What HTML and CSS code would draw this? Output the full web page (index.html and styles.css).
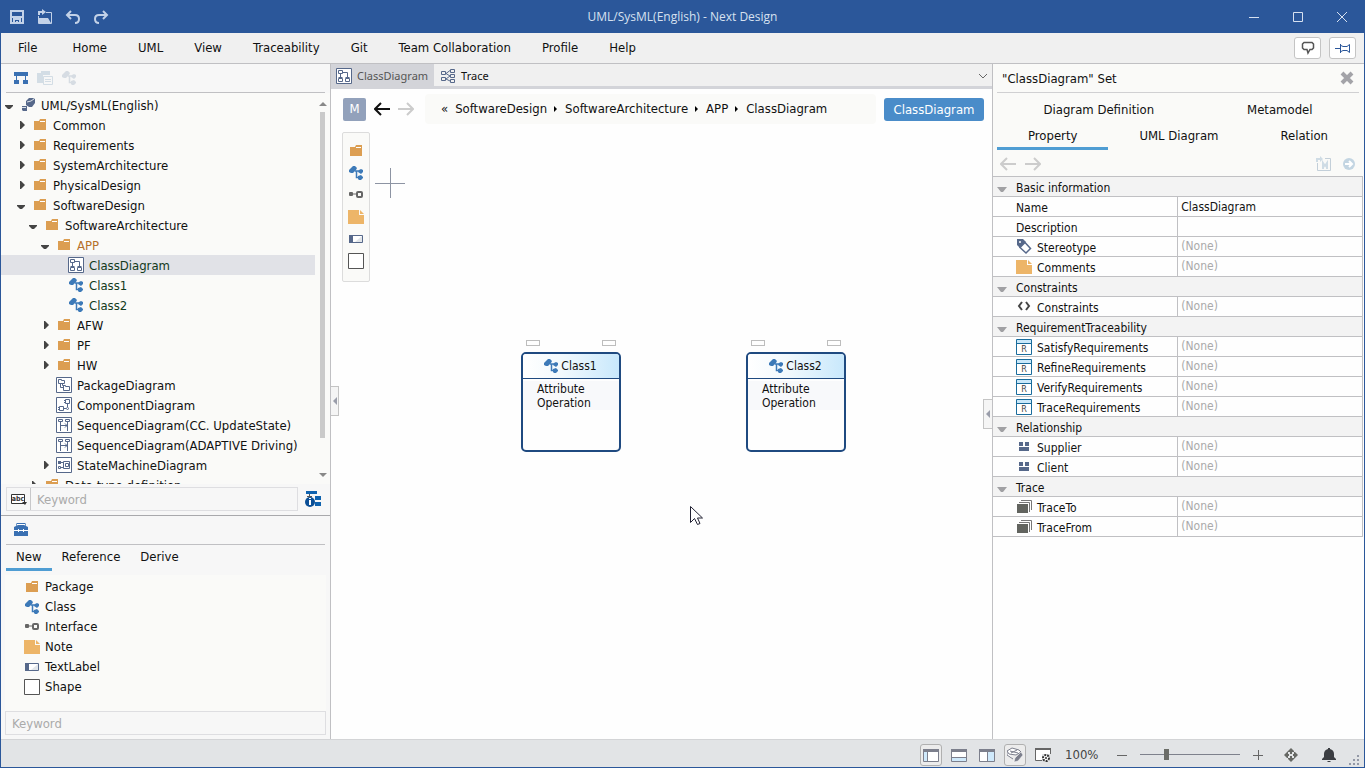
FILE: index.html
```
<!DOCTYPE html>
<html lang="en">
<head>
    <meta charset="UTF-8">
    <meta name="viewport" content="width=device-width, initial-scale=1.0">
    <title>UML/SysML(English) - Next Design</title>
    <link rel="stylesheet" href="styles.css">
</head>
<body>
    <!-- shared icons -->
    <svg class="sprite" aria-hidden="true">
        <symbol id="i-folder" viewBox="0 0 16 16">
            <path fill="#dc9e52" d="M2 4h5l1-2h6v11H2z"/>
            <path fill="none" stroke="#fff" d="M8 4.500h5"/>
        </symbol>
        <symbol id="i-class" viewBox="0 0 16 16">
            <path fill="#3d7ab8" d="M1 5l4-4h2l2 2-1 2-3 3H3L1 7zM11 5l2-1 2 1v2l-2 2-3-2zM10 11l3-1 2 2v1l-2 2h-2l-1-1z"/>
            <path fill="none" stroke="#3d7ab8" stroke-width="1.500" d="M7 6h4M8.500 6.500v6h3"/>
        </symbol>
        <symbol id="i-interface" viewBox="0 0 16 16">
            <rect x="1" y="5" width="4" height="4" rx="1" fill="#666"/>
            <path stroke="#666" d="M4 7h4"/>
            <rect x="9" y="5" width="5" height="5" rx="1" fill="none" stroke="#666" stroke-width="2"/>
        </symbol>
        <symbol id="i-note" viewBox="0 0 16 16">
            <path fill="#edb568" d="M0 1h11v5h5v9H0zM12 1l4 4h-4z"/>
        </symbol>
        <symbol id="i-label" viewBox="0 0 16 16">
            <path fill="#fff" stroke="#56688a" d="M1.500 4.500h13v7h-13z"/>
            <path fill="#e2e6ea" d="M14 5v6H7z"/>
            <path fill="#56688a" d="M1 4h4v8H1z"/>
        </symbol>
        <symbol id="i-shape" viewBox="0 0 16 16">
            <path fill="#fff" stroke="#555" d="M.5.5h15v15H.5z"/>
        </symbol>
        <symbol id="i-classdiagram" viewBox="0 0 16 16">
            <path fill="#fff" stroke="#56688a" d="M.5.5h15v15H.5z"/>
            <path fill="none" stroke="#56688a" d="M2.500 2.500h4v3h-4zM2.500 10.500h4v3h-4zM9.500 10.500h4v3h-4zM4.500 6v4M7 4.500h4.500V10M2.500 9.500h4M9.500 9.500h4"/>
        </symbol>
        <symbol id="i-packagediagram" viewBox="0 0 16 16">
            <path fill="#fff" stroke="#56688a" d="M.5.5h15v15H.5z"/>
            <path fill="none" stroke="#56688a" d="M2.500 2.500h3v1h3v3h-6zM7.500 8.500h2v1h4v4h-6zM4.500 7v3.500H7M6.500 7v1.500h2"/>
        </symbol>
        <symbol id="i-componentdiagram" viewBox="0 0 16 16">
            <path fill="#fff" stroke="#56688a" d="M.5.5h15v15H.5z"/>
            <path fill="none" stroke="#56688a" d="M9.500 2.500h4v4h-4zM8 3.500h2M8 5.500h2M3.500 9.500h4v4h-4zM2 10.500h2M2 12.500h2M8 11.500h2M11.500 7v3"/>
            <circle cx="11.500" cy="11.500" r="1" fill="none" stroke="#56688a"/>
        </symbol>
        <symbol id="i-sequencediagram" viewBox="0 0 16 16">
            <path fill="#fff" stroke="#56688a" d="M.5.5h15v15H.5z"/>
            <path fill="none" stroke="#56688a" d="M2.500 2.500h4v2h-4zM9.500 2.500h4v2h-4zM4.500 5v9M11.500 5v9M5 8.500h6M9 6.500l2 2-2 2"/>
        </symbol>
        <symbol id="i-statediagram" viewBox="0 0 16 16">
            <path fill="#fff" stroke="#56688a" d="M.5.5h15v15H.5z"/>
            <path fill="none" stroke="#56688a" d="M2.500 9.500h2v2h-2zM7.500 4.500h6v7h-6zM9.500 6.500h3v3h-3zM5 5.500h3M5 10.500h2"/>
            <path fill="#56688a" d="M2 4h3v3H2z"/>
        </symbol>
        <symbol id="i-req" viewBox="0 0 16 16">
            <path fill="#fff" stroke="#1a6c9c" d="M.5.5h15v15H.5z"/>
            <path fill="#c9e9fb" d="M1 1h14v3H1z"/>
            <path stroke="#1a6c9c" d="M1 4.500h14"/>
            <text x="8" y="13" text-anchor="middle" class="req-letter">R</text>
        </symbol>
        <symbol id="i-relation" viewBox="0 0 16 16">
            <path fill="#56688a" d="M3 3h4v4H3zM9 3h4v4H9zM3 8h10v4H3z"/>
        </symbol>
        <symbol id="i-stack" viewBox="0 0 16 16">
            <path fill="none" stroke="#777" d="M5 1.500h10.500V11M3 3.500h10.500V13"/>
            <path fill="#62645f" d="M1 5h11v9H1z"/>
        </symbol>
        <symbol id="i-back" viewBox="0 0 16 16">
            <path fill="none" stroke="currentColor" stroke-width="2" d="M16 8H1M7 2L1 8l6 6"/>
        </symbol>
        <symbol id="i-forward" viewBox="0 0 16 16">
            <path fill="none" stroke="currentColor" stroke-width="2" d="M0 8h15M9 2l6 6-6 6"/>
        </symbol>
        <symbol id="i-down" viewBox="0 0 16 16"><path fill="currentColor" d="M4 8h8v1l-3 3H7L4 9z"/></symbol>
        <symbol id="i-right" viewBox="0 0 16 16"><path fill="currentColor" d="M7 4h1l4 4-4 4H7z"/></symbol>
        <symbol id="i-fold" viewBox="0 0 16 16"><path fill="currentColor" d="M2 8h10l-4 5H6z"/></symbol>
    </svg>

    <header class="titlebar">
        <div class="quick-access">
            <button aria-label="Save"><svg viewBox="0 0 16 16"><path fill="none" stroke="#c3d2e8" stroke-width="2" d="M2 2h12v12H2zM2 8h12M5 14v-4h6v4"/><path fill="#c3d2e8" d="M7 12h2v2H7z"/></svg></button>
            <button aria-label="Open"><svg viewBox="0 0 16 16"><path fill="none" stroke="#c3d2e8" d="M1.500 7v7.500h13V3.500H9"/><path fill="#c3d2e8" d="M2 14V9h9l3 5zM1 2h4V0l4 3-4 3V4H3v2H1z"/></svg></button>
            <button aria-label="Undo"><svg viewBox="0 0 16 16"><path fill="none" stroke="#c3d2e8" stroke-width="2" d="M6 2L2 6l4 4M2 6h8q4 0 4 4t-4 4"/></svg></button>
            <button aria-label="Redo"><svg viewBox="0 0 16 16"><path fill="none" stroke="#c3d2e8" stroke-width="2" d="M10 2l4 4-4 4M14 6H6q-4 0-4 4t4 4"/></svg></button>
        </div>
        <h1>UML/SysML(English) - Next Design</h1>
        <div class="window-controls">
            <button aria-label="Minimize"><svg viewBox="0 0 12 12"><path stroke="#d7e1f0" d="M1 6.500h10"/></svg></button>
            <button aria-label="Maximize"><svg viewBox="0 0 12 12"><path fill="none" stroke="#d7e1f0" d="M1.500 1.500h9v9h-9z"/></svg></button>
            <button aria-label="Close"><svg viewBox="0 0 12 12"><path stroke="#d7e1f0" d="M1 1l10 10M11 1L1 11"/></svg></button>
        </div>
    </header>

    <nav class="menubar">
        <button class="file-menu">File</button>
        <button>Home</button>
        <button>UML</button>
        <button>View</button>
        <button>Traceability</button>
        <button>Git</button>
        <button>Team Collaboration</button>
        <button>Profile</button>
        <button>Help</button>
        <div class="menubar-tools">
            <button aria-label="Comments"><svg viewBox="0 0 16 16"><path fill="none" stroke="#555" stroke-width="1.500" d="M4 2.500h8L13.500 4v4L12 9.500h-2L8 13 7 9.500H4L2.500 8V4z"/></svg></button>
            <button aria-label="Pin ribbon"><svg viewBox="0 0 16 16"><path fill="none" stroke="#2b579a" d="M0 8.500h5M5.500 4v9M6 5.500l2 1h4l2.500-2v8L12 10.500H8l-2 1"/></svg></button>
        </div>
    </nav>

    <main class="workspace">
        <aside class="navigator">
            <div class="tool-row">
                <button aria-label="Model tree"><svg viewBox="0 0 16 16"><path fill="#3a70b2" d="M1 2h14v4H1zM1 10h5v4H1zM10 10h5v4h-5zM3 6h1v4H3zM12 6h1v4h-1z"/></svg></button>
                <button aria-label="Documents"><svg viewBox="0 0 16 16"><path fill="#d3dde5" d="M0 3h4V1h9v4H6v8H0z"/><path fill="#f7f7f7" stroke="#d3dde5" d="M6.500 6.500h9v8h-9zM8 9.500h6M8 11.500h6"/></svg></button>
                <button aria-label="Classes" class="faded"><svg><use href="#i-class"/></svg></button>
            </div>
            <div class="tree-wrap">
                <ul class="tree">
                    <li class="level-0"><svg><use href="#i-down"/></svg><svg viewBox="0 0 16 16"><path fill="#56688a" d="M2 9h5v5H3l-1-1zM6 4l3-3h4l2 1v4l-3 4H9L6 8z"/><path stroke="#dde3ea" d="M7 5l4-1 3-2M2 10.500h4" fill="none"/></svg>UML/SysML(English)</li>
                    <li class="level-1"><svg><use href="#i-right"/></svg><svg><use href="#i-folder"/></svg>Common</li>
                    <li class="level-1"><svg><use href="#i-right"/></svg><svg><use href="#i-folder"/></svg>Requirements</li>
                    <li class="level-1"><svg><use href="#i-right"/></svg><svg><use href="#i-folder"/></svg>SystemArchitecture</li>
                    <li class="level-1"><svg><use href="#i-right"/></svg><svg><use href="#i-folder"/></svg>PhysicalDesign</li>
                    <li class="level-1"><svg><use href="#i-down"/></svg><svg><use href="#i-folder"/></svg>SoftwareDesign</li>
                    <li class="level-2"><svg><use href="#i-down"/></svg><svg><use href="#i-folder"/></svg>SoftwareArchitecture</li>
                    <li class="level-3 changed"><svg><use href="#i-down"/></svg><svg><use href="#i-folder"/></svg>APP</li>
                    <li class="level-4 added selected"><svg></svg><svg><use href="#i-classdiagram"/></svg>ClassDiagram</li>
                    <li class="level-4 added"><svg></svg><svg><use href="#i-class"/></svg>Class1</li>
                    <li class="level-4 added"><svg></svg><svg><use href="#i-class"/></svg>Class2</li>
                    <li class="level-3"><svg><use href="#i-right"/></svg><svg><use href="#i-folder"/></svg>AFW</li>
                    <li class="level-3"><svg><use href="#i-right"/></svg><svg><use href="#i-folder"/></svg>PF</li>
                    <li class="level-3"><svg><use href="#i-right"/></svg><svg><use href="#i-folder"/></svg>HW</li>
                    <li class="level-3"><svg></svg><svg><use href="#i-packagediagram"/></svg>PackageDiagram</li>
                    <li class="level-3"><svg></svg><svg><use href="#i-componentdiagram"/></svg>ComponentDiagram</li>
                    <li class="level-3"><svg></svg><svg><use href="#i-sequencediagram"/></svg>SequenceDiagram(CC. UpdateState)</li>
                    <li class="level-3"><svg></svg><svg><use href="#i-sequencediagram"/></svg>SequenceDiagram(ADAPTIVE Driving)</li>
                    <li class="level-3"><svg><use href="#i-right"/></svg><svg><use href="#i-statediagram"/></svg>StateMachineDiagram</li>
                    <li class="level-2"><svg><use href="#i-right"/></svg><svg><use href="#i-folder"/></svg>Data type definition</li>
                </ul>
                <div class="scrollbar">
                    <svg viewBox="0 0 8 8"><path fill="#888" d="M0 6l4-4 4 4z"/></svg>
                    <div class="scroll-thumb"></div>
                    <svg viewBox="0 0 8 8"><path fill="#888" d="M0 2l4 4 4-4z"/></svg>
                </div>
            </div>
            <div class="search-row">
                <div class="search-box">
                    <button aria-label="Match mode"><svg viewBox="0 0 18 16"><path fill="#fff" stroke="#333" d="M1.500 3.500h13v9h-13z"/><text x="8" y="10" text-anchor="middle" class="abc">abc</text><path fill="#333" d="M12 11h5l-2 3z"/></svg></button>
                    <input type="text" placeholder="Keyword" aria-label="Search model">
                </div>
                <button aria-label="Tree options"><svg viewBox="0 0 16 16"><path fill="#0f62ae" d="M1 0h11v3H1zM10 5h6v4h-6zM10 11h6v4h-6z"/><path stroke="#555" d="M4.500 3v3M2 5.500h5" fill="none"/><circle cx="5" cy="11" r="5" fill="#0b4f96"/><path fill="#fff" d="M4 7h2v1H4zM4 9h2v5H4z"/></svg></button>
            </div>

            <section class="toolbox">
                <div class="tool-row">
                    <button aria-label="Toolbox"><svg viewBox="0 0 16 16"><path fill="#3a70b2" d="M1 5l2-1V2l1-1h8l1 1v2l2 1v9H1z"/><path fill="none" stroke="#fff" d="M4 3.500V2.500h8v1M1 8.500h14M5.500 7v3M10.500 7v3"/></svg></button>
                </div>
                <div class="tabs">
                    <button class="active">New</button>
                    <button>Reference</button>
                    <button>Derive</button>
                </div>
                <ul class="tool-list">
                    <li><svg><use href="#i-folder"/></svg>Package</li>
                    <li><svg><use href="#i-class"/></svg>Class</li>
                    <li><svg><use href="#i-interface"/></svg>Interface</li>
                    <li><svg><use href="#i-note"/></svg>Note</li>
                    <li><svg><use href="#i-label"/></svg>TextLabel</li>
                    <li><svg><use href="#i-shape"/></svg>Shape</li>
                </ul>
                <input class="tool-search" type="text" placeholder="Keyword" aria-label="Search tools">
            </section>
        </aside>

        <section class="editor">
            <div class="doc-tabs">
                <button class="active"><svg><use href="#i-classdiagram"/></svg>ClassDiagram</button>
                <button><svg viewBox="0 0 16 16"><path fill="none" stroke="#56688a" d="M1.500 3.500h4v3h-4zM1.500 9.500h4v3h-4zM10.500 1.500h4v3h-4zM10.500 6.500h4v3h-4zM10.500 11.500h4v3h-4zM6 5.500l4-3M6 5.500l4 2.500M6 11l4-3M6 11l4 2"/></svg>Trace</button>
                <button class="tab-menu" aria-label="Open tabs"><svg viewBox="0 0 10 10"><path fill="none" stroke="#666" d="M1 3l4 4 4-4"/></svg></button>
            </div>
            <div class="path-row">
                <button class="model-btn">M</button>
                <button aria-label="Back"><svg><use href="#i-back"/></svg></button>
                <button aria-label="Forward" class="disabled"><svg><use href="#i-forward"/></svg></button>
                <nav class="breadcrumb">
                    <button>«</button>
                    <a href="#">SoftwareDesign</a>
                    <svg viewBox="0 0 4 8"><path d="M0 1l3 3-3 3z"/></svg>
                    <a href="#">SoftwareArchitecture</a>
                    <svg viewBox="0 0 4 8"><path d="M0 1l3 3-3 3z"/></svg>
                    <a href="#">APP</a>
                    <svg viewBox="0 0 4 8"><path d="M0 1l3 3-3 3z"/></svg>
                    <a href="#">ClassDiagram</a>
                </nav>
                <button class="view-btn">ClassDiagram</button>
            </div>
            <div class="canvas">
                <div class="palette">
                    <button aria-label="Package"><svg><use href="#i-folder"/></svg></button>
                    <button aria-label="Class"><svg><use href="#i-class"/></svg></button>
                    <button aria-label="Interface"><svg><use href="#i-interface"/></svg></button>
                    <button aria-label="Note"><svg><use href="#i-note"/></svg></button>
                    <button aria-label="TextLabel"><svg><use href="#i-label"/></svg></button>
                    <button aria-label="Shape"><svg><use href="#i-shape"/></svg></button>
                </div>
                <svg class="origin" viewBox="0 0 30 30"><path stroke="#8d94a3" d="M0 15.500h30M15.500 0v30"/></svg>
                <div class="node node-1">
                    <div class="ports"><i></i><i></i></div>
                    <div class="node-box">
                        <div class="node-name"><svg><use href="#i-class"/></svg>Class1</div>
                        <div class="members"><p>Attribute</p><p>Operation</p></div>
                    </div>
                </div>
                <div class="node node-2">
                    <div class="ports"><i></i><i></i></div>
                    <div class="node-box">
                        <div class="node-name"><svg><use href="#i-class"/></svg>Class2</div>
                        <div class="members"><p>Attribute</p><p>Operation</p></div>
                    </div>
                </div>
                <svg class="pointer" viewBox="0 0 13 20"><path fill="#fff" stroke="#223" d="M.5.5v16l4-4 3 6 2.500-1-2.500-5.500h5z"/></svg>
                <button class="collapse collapse-left" aria-label="Collapse navigator"><svg viewBox="0 0 4 8"><path fill="#9a9daa" d="M4 0v8L0 4z"/></svg></button>
                <button class="collapse collapse-right" aria-label="Collapse inspector"><svg viewBox="0 0 4 8"><path fill="#9a9daa" d="M4 0v8L0 4z"/></svg></button>
            </div>
        </section>

        <aside class="inspector">
            <div class="inspector-head">
                <h2>"ClassDiagram" Set</h2>
                <button aria-label="Close"><svg viewBox="0 0 14 14"><path stroke="#a3a3a8" stroke-width="4" d="M2 2l10 10M12 2L2 12"/></svg></button>
            </div>
            <div class="inspector-tabs">
                <button>Diagram Definition</button>
                <button>Metamodel</button>
            </div>
            <div class="inspector-tabs">
                <button class="active">Property</button>
                <button>UML Diagram</button>
                <button>Relation</button>
            </div>
            <div class="inspector-nav">
                <button aria-label="Back"><svg><use href="#i-back"/></svg></button>
                <button aria-label="Forward"><svg><use href="#i-forward"/></svg></button>
                <button class="push" aria-label="Open metamodel"><svg viewBox="0 0 16 16"><path fill="none" stroke="#c3cfd9" d="M1.500 7v7.500h13v-12H9"/><path fill="none" stroke="#cfdce5" stroke-width="2" d="M7 13V7l2 3 2-3v6"/><path fill="#cfdce5" d="M0 2h4V0l3 3-3 3V4H2v2H0z"/></svg></button>
                <button aria-label="Go to"><svg viewBox="0 0 16 16"><circle cx="8" cy="8" r="6" fill="#c3d5e2"/><path fill="none" stroke="#fff" stroke-width="2" d="M4 8h7M8 5l3 3-3 3"/></svg></button>
            </div>
            <div class="props-wrap">
                <table class="props">
                    <tbody>
                        <tr class="group"><th colspan="2"><div><svg class="fold"><use href="#i-fold"/></svg>Basic information</div></th></tr>
                        <tr><th><div>Name</div></th><td class="value">ClassDiagram</td></tr>
                        <tr><th><div>Description</div></th><td></td></tr>
                        <tr><th><div><svg viewBox="0 0 16 16"><path fill="#56688a" d="M1 0h6l3 3-6 6-3-3z"/><path fill="#fff" stroke="#56688a" stroke-width="1.500" d="M9 3.500l5.500 6L10 14 4 8.500z"/><circle cx="4" cy="3" r="1" fill="#fff"/></svg>Stereotype</div></th><td>(None)</td></tr>
                        <tr><th><div><svg><use href="#i-note"/></svg>Comments</div></th><td>(None)</td></tr>
                        <tr class="group"><th colspan="2"><div><svg class="fold"><use href="#i-fold"/></svg>Constraints</div></th></tr>
                        <tr><th><div><svg viewBox="0 0 16 16"><path fill="none" stroke="#444" stroke-width="2" d="M6 3L3 7l3 4M10 3l3 4-3 4"/></svg>Constraints</div></th><td>(None)</td></tr>
                        <tr class="group"><th colspan="2"><div><svg class="fold"><use href="#i-fold"/></svg>RequirementTraceability</div></th></tr>
                        <tr><th><div><svg><use href="#i-req"/></svg>SatisfyRequirements</div></th><td>(None)</td></tr>
                        <tr><th><div><svg><use href="#i-req"/></svg>RefineRequirements</div></th><td>(None)</td></tr>
                        <tr><th><div><svg><use href="#i-req"/></svg>VerifyRequirements</div></th><td>(None)</td></tr>
                        <tr><th><div><svg><use href="#i-req"/></svg>TraceRequirements</div></th><td>(None)</td></tr>
                        <tr class="group"><th colspan="2"><div><svg class="fold"><use href="#i-fold"/></svg>Relationship</div></th></tr>
                        <tr><th><div><svg><use href="#i-relation"/></svg>Supplier</div></th><td>(None)</td></tr>
                        <tr><th><div><svg><use href="#i-relation"/></svg>Client</div></th><td>(None)</td></tr>
                        <tr class="group"><th colspan="2"><div><svg class="fold"><use href="#i-fold"/></svg>Trace</div></th></tr>
                        <tr><th><div><svg><use href="#i-stack"/></svg>TraceTo</div></th><td>(None)</td></tr>
                        <tr><th><div><svg><use href="#i-stack"/></svg>TraceFrom</div></th><td>(None)</td></tr>
                    </tbody>
                </table>
            </div>
        </aside>
    </main>

    <footer class="statusbar">
        <div class="layout-buttons">
            <button class="on" aria-label="Left pane"><svg viewBox="0 0 16 16"><path fill="#fff" stroke="#7c7f8c" d="M.5 2.500h15v12H.5z"/><path fill="#7c7f8c" d="M0 2h16v3H0z"/><path fill="#cfe9fb" d="M1 5h3v9H1z"/><path stroke="#7c7f8c" d="M4.500 5v9"/></svg></button>
            <button aria-label="Bottom pane"><svg viewBox="0 0 16 16"><path fill="#fff" stroke="#7c7f8c" d="M.5 2.500h15v12H.5z"/><path fill="#7c7f8c" d="M0 2h16v3H0z"/><path fill="#cfe9fb" d="M1 10h14v4H1z"/><path stroke="#7c7f8c" d="M1 10.500h14"/></svg></button>
            <button aria-label="Right pane"><svg viewBox="0 0 16 16"><path fill="#fff" stroke="#7c7f8c" d="M.5 2.500h15v12H.5z"/><path fill="#7c7f8c" d="M0 2h16v3H0z"/><path fill="#cfe9fb" d="M9 5h6v9H9z"/><path stroke="#7c7f8c" d="M8.500 5v9"/></svg></button>
            <button class="on" aria-label="Edit layout"><svg viewBox="0 0 16 16"><path fill="#fff" stroke="#7c7f8c" d="M0 4l5-3 7 2 2 2-5 3-7-1zM0 4v4l6 4M4 6l6-3M3 4l8 2"/><path fill="#7c7f8c" stroke="#fff" stroke-width=".5" d="M7 15l1-4 6-6 2 3-5 6z"/></svg></button>
            <button aria-label="View settings"><svg viewBox="0 0 16 16"><path fill="#fff" stroke="#666" d="M.5 1.500h15v12H.5z"/><path fill="#666" d="M0 1h16v2H0z"/><path fill="#e2e4e6" d="M7 7h9v9H7z"/><circle cx="11" cy="11" r="3" fill="#fff" stroke="#333" stroke-width="2" stroke-dasharray="2 1"/><circle cx="11" cy="11" r="1" fill="#333"/></svg></button>
        </div>
        <span class="zoom-value">100%</span>
        <div class="zoom">
            <button aria-label="Zoom out"><svg viewBox="0 0 10 10"><path stroke="#666" d="M0 5.500h10"/></svg></button>
            <input type="range" min="0" max="100" value="25" aria-label="Zoom">
            <button aria-label="Zoom in"><svg viewBox="0 0 10 10"><path stroke="#666" d="M0 5.500h10M5.500 0v10"/></svg></button>
        </div>
        <button class="fit" aria-label="Fit to window"><svg viewBox="0 0 16 16"><path fill="#666864" d="M8 1l4 4H9v2H7V5H4zM8 15l4-4H9V9H7v2H4zM1 8l4-4v3h1v2H5v3zM15 8l-4-4v3h-1v2h1v3z"/></svg></button>
        <button class="bell" aria-label="Notifications"><svg viewBox="0 0 16 16"><path fill="#3b3d42" d="M7 1h2v1q4 1 4 5v3l2 2v1H1v-1l2-2V7q0-4 4-5zM6 14h4l-1 1H7z"/></svg></button>
        <svg class="grip" viewBox="0 0 12 12"><path fill="#9398a6" d="M8 0h2v2H8zM8 4h2v2H8zM8 8h2v2H8zM4 4h2v2H4zM4 8h2v2H4zM0 8h2v2H0z"/></svg>
    </footer>
</body>
</html>
```
FILE: styles.css
```
* {
    box-sizing: border-box;
}
body {
    margin: 0;
    height: 100vh;
    display: flex;
    flex-direction: column;
    overflow: hidden;
    background: #f0f0f0;
    border: 1px solid #2b579a;
    border-top: 0;
    font-family: "DejaVu Sans Condensed", "Noto Sans", sans-serif;
    font-size: 13px;
    line-height: 20px;
    color: #111;
}
button, input {
    font: inherit;
    color: inherit;
}
button {
    background: none;
    border: 0;
    padding: 0;
    display: flex;
    align-items: center;
    justify-content: center;
    white-space: nowrap;
}
ul {
    list-style: none;
    margin: 0;
    padding: 0;
}
h1, h2, p {
    margin: 0;
    font-weight: normal;
}
svg {
    width: 16px;
    height: 16px;
    flex: none;
    display: block;
}
.sprite {
    display: none;
}
.req-letter {
    font-size: 9px;
    fill: #444;
}
.abc {
    font-size: 7px;
    font-weight: bold;
    fill: #333;
}

/* title bar */
.titlebar {
    flex: none;
    height: 33px;
    display: grid;
    grid-template-columns: 1fr auto 1fr;
    align-items: center;
    padding-top: 1px;
    background: #2b579a;
    color: #d7e1f0;
}
.titlebar h1 {
    font-family: "Open Sans", sans-serif;
    font-size: 12px;
}
.quick-access {
    display: flex;
    gap: 12px;
    padding-left: 8px;
}
.window-controls {
    display: flex;
    justify-content: flex-end;
    gap: 32px;
    padding-right: 16px;
}
.window-controls svg {
    width: 12px;
    height: 12px;
}

/* menu */
.menubar {
    flex: none;
    height: 31px;
    display: flex;
    align-items: center;
    gap: 31px;
    padding: 0 8px 0 17px;
    border-bottom: 1px solid #c0c0c3;
}
.file-menu {
    padding-right: 4px;
}
.menubar-tools {
    display: flex;
    gap: 8px;
    margin-left: auto;
}
.menubar-tools button {
    width: 27px;
    height: 22px;
    background: #fff;
    border: 1px solid #c4c4c4;
    border-radius: 3px;
}

.workspace {
    flex: 1;
    min-height: 0;
    display: flex;
}

/* left side */
.navigator {
    flex: none;
    width: 330px;
    display: flex;
    flex-direction: column;
    background: #f7f7f7;
    border-right: 1px solid #c0c0c3;
}
.tool-row {
    flex: none;
    height: 29px;
    display: flex;
    align-items: center;
    gap: 8px;
    margin: 0 5px;
    padding-left: 7px;
    border-bottom: 1px solid #c0c0c3;
}
.faded {
    opacity: 0.2;
    filter: grayscale(0.5);
}
.tree-wrap {
    flex: 1;
    min-height: 0;
    display: flex;
    padding-top: 2px;
    background: #fafaf8;
}
.tree {
    flex: 1;
    overflow: hidden;
}
.tree li {
    height: 20px;
    display: flex;
    align-items: flex-start;
    padding-top: 2px;
    line-height: 18px;
    white-space: nowrap;
}
.tree svg:first-child {
    margin-right: 3px;
    color: #444;
}
.tree svg + svg {
    margin-right: 5px;
}
.level-1 { padding-left: 12px; }
.level-2 { padding-left: 24px; }
.level-3 { padding-left: 36px; }
.level-4 { padding-left: 48px; }
.changed {
    color: #b5702a;
}
.added {
    color: #123a1c;
}
.selected {
    background: #e1e2e7;
}
.scrollbar {
    width: 15px;
    display: flex;
    flex-direction: column;
    align-items: center;
    padding: 5px 0;
}
.scrollbar svg {
    width: 8px;
    height: 8px;
}
.scroll-thumb {
    width: 5px;
    height: 86%;
    margin: 4px 0 auto;
    background: #cacaca;
}
.search-row {
    flex: none;
    display: flex;
    align-items: center;
    gap: 7px;
    padding: 3px 9px 4px 5px;
}
.search-box {
    flex: 1;
    display: flex;
    height: 24px;
    border: 1px solid #dedee1;
}
.search-box button {
    width: 24px;
    border-right: 1px solid #c8c8ca;
}
.search-box button svg {
    width: 18px;
}
.search-box input {
    flex: 1;
    min-width: 0;
    border: 0;
    background: none;
    padding: 1px 6px 0;
}
::placeholder {
    color: #aaa;
    opacity: 1;
}
.toolbox {
    flex: none;
    display: flex;
    flex-direction: column;
    border-top: 1px solid #a9a9ac;
}
.tabs {
    display: flex;
    height: 26px;
    margin: 0 5px 4px;
}
.tabs button {
    padding: 0 10px;
    border-bottom: 3px solid transparent;
}
.tabs .active, .inspector-tabs .active {
    border-bottom-color: #4f9dd3;
}
.tool-list {
    margin: 0 4px;
    padding: 2px 0 14px 19px;
    background: #fafaf8;
}
.tool-list li {
    height: 20px;
    display: flex;
    align-items: center;
    gap: 5px;
}
.tool-search {
    height: 24px;
    margin: 0 4px 4px;
    padding: 0 6px;
    border: 1px solid #dedee1;
    background: #f7f7f7;
}

/* diagram editor */
.editor {
    flex: 1;
    min-width: 0;
    display: flex;
    flex-direction: column;
    background: #fefefe;
}
.doc-tabs {
    flex: none;
    display: flex;
    height: 25px;
    background: #f0f0f0;
    border-bottom: 3px solid #d3d4d9;
    font-family: "Noto Sans", sans-serif;
    font-size: 11px;
}
.doc-tabs button {
    gap: 5px;
    padding: 2px 6px 0;
}
.doc-tabs .active {
    background: #d3d4d9;
    color: #555;
    padding: 2px 6px 0 5px;
}
.doc-tabs .tab-menu {
    margin-left: auto;
    padding: 2px 4px 0;
}
.tab-menu svg {
    width: 10px;
    height: 10px;
}
.path-row {
    flex: none;
    display: flex;
    align-items: center;
    gap: 8px;
    padding: 5px 8px 0 12px;
}
.model-btn, .view-btn {
    width: 23px;
    height: 23px;
    background: #92a1bb;
    color: #fff;
    border-radius: 2px;
}
.view-btn {
    width: 100px;
    padding-top: 1px;
    background: #4a8cc9;
    border-radius: 3px;
}
.disabled {
    color: #ccc;
}
.breadcrumb {
    flex: 1;
    height: 30px;
    display: flex;
    align-items: center;
    gap: 7px;
    margin-left: 3px;
    padding-left: 16px;
    background: #fafaf8;
    border-radius: 4px;
}
.breadcrumb a {
    color: inherit;
    text-decoration: none;
}
.breadcrumb svg {
    width: 4px;
    height: 8px;
}
.canvas {
    flex: 1;
    position: relative;
    overflow: hidden;
}
.palette {
    position: absolute;
    left: 11px;
    top: 8px;
    display: flex;
    flex-direction: column;
    gap: 6px;
    padding: 10px 5px 12px;
    border: 1px solid #dcdcdc;
    border-radius: 2px;
    background: #fafaf8;
}
.origin {
    position: absolute;
    left: 44px;
    top: 44px;
    width: 30px;
    height: 30px;
}
.node {
    position: absolute;
    top: 216px;
    width: 100px;
    font-size: 12px;
}
.node-1 { left: 190px; }
.node-2 { left: 415px; }
.ports {
    display: flex;
    justify-content: space-between;
    padding: 0 5px;
    margin-bottom: 6px;
}
.ports i {
    width: 14px;
    height: 6px;
    border: 1px solid #bdbdbd;
}
.node-box {
    height: 100px;
    border: 2px solid #1f4a80;
    border-radius: 5px;
    overflow: hidden;
    background: #fefefe;
}
.node-name {
    height: 25px;
    display: flex;
    align-items: center;
    justify-content: center;
    gap: 2px;
    padding-right: 2px;
    border-bottom: 1px solid #1f4a80;
    background: linear-gradient(90deg, #fff, #f2f9fd 40%, #c8e8fc);
}
.members {
    margin-top: 2px;
    padding: 1px 0 0 14px;
    background: #f8f9fb;
    line-height: 14px;
}
.pointer {
    position: absolute;
    left: 359px;
    top: 382px;
    width: 13px;
    height: 20px;
}
.collapse {
    position: absolute;
    width: 8px;
    height: 30px;
    background: #f5f5f5;
    border: 1px solid #c4c4c4;
}
.collapse svg {
    width: 4px;
    height: 8px;
}
.collapse-left {
    left: 0;
    top: 262px;
    border-left: 0;
}
.collapse-right {
    right: 0;
    top: 275px;
    width: 9px;
    border-right: 0;
}

/* inspector */
.inspector {
    flex: none;
    width: 372px;
    background: #fafaf8;
    border-left: 1px solid #c0c0c3;
    display: flex;
    flex-direction: column;
}
.inspector-head {
    flex: none;
    height: 29px;
    display: flex;
    align-items: center;
    justify-content: space-between;
    margin: 0 5px 5px 4px;
    padding: 0 5px;
    border-bottom: 1px solid #d0d0d2;
}
.inspector-head h2 {
    padding-top: 1px;
    font-size: 13px;
}
.inspector-head svg {
    width: 14px;
    height: 14px;
}
.inspector-tabs {
    display: flex;
    margin: 0 5px 0 4px;
}
.inspector-tabs button {
    flex: 1 1 auto;
    height: 26px;
    border-bottom: 3px solid transparent;
}
.inspector-tabs .active {
    border-bottom-color: #4f9dd3;
}
.inspector-nav {
    flex: none;
    display: flex;
    align-items: center;
    gap: 9px;
    height: 26px;
    padding: 2px 7px 0;
    color: #ccc;
}
.push {
    margin-left: auto;
}
.props-wrap {
    flex: 1;
    min-height: 0;
    background: #fefefe;
}
.props {
    width: calc(100% - 1px);
    border-collapse: collapse;
    table-layout: fixed;
    font-size: 12px;
    line-height: 19px;
}
.props th, .props td {
    height: 20px;
    padding: 0;
    border: 1px solid #c0c0c3;
    font-weight: normal;
    text-align: left;
}
.props th {
    border-left: 0;
}
.props th div {
    display: flex;
    align-items: flex-start;
    gap: 5px;
    height: 19px;
    padding: 2px 0 0 23px;
    line-height: 18px;
}
.props .group th {
    background: #f3f3f3;
}
.props .group th div {
    padding-left: 2px;
}
.fold {
    color: #a0a0a3;
}
.props td {
    padding-left: 3px;
    color: #aaa;
}
.props td.value {
    padding-top: 2px;
    line-height: 17px;
    color: #111;
}

/* status bar */
.statusbar {
    flex: none;
    height: 28px;
    display: flex;
    align-items: center;
    justify-content: flex-end;
    padding: 2px 3px 0 0;
    background: #e2e4e6;
    border-top: 1px solid #d3d4d6;
    color: #444;
}
.layout-buttons {
    display: flex;
    gap: 6px;
}
.layout-buttons button {
    width: 22px;
    height: 22px;
    border-radius: 3px;
}
.layout-buttons .on {
    border: 1px solid #b0b0b0;
    background: #ececec;
}
.zoom-value {
    width: 36px;
    margin: 0 16px 0 11px;
}
.zoom {
    display: flex;
    align-items: center;
    gap: 13px;
}
.zoom svg {
    width: 10px;
    height: 10px;
}
.zoom input {
    appearance: none;
    width: 100px;
    height: 12px;
    margin: 0;
    background: linear-gradient(#7e818c, #7e818c) center / 100% 1px no-repeat;
}
.zoom input::-webkit-slider-thumb {
    appearance: none;
    width: 5px;
    height: 11px;
    background: #6b6d68;
}
.fit {
    margin-left: 20px;
}
.bell {
    margin: 0 12px 0 22px;
}
.grip {
    width: 12px;
    height: 12px;
    align-self: flex-end;
}
```
